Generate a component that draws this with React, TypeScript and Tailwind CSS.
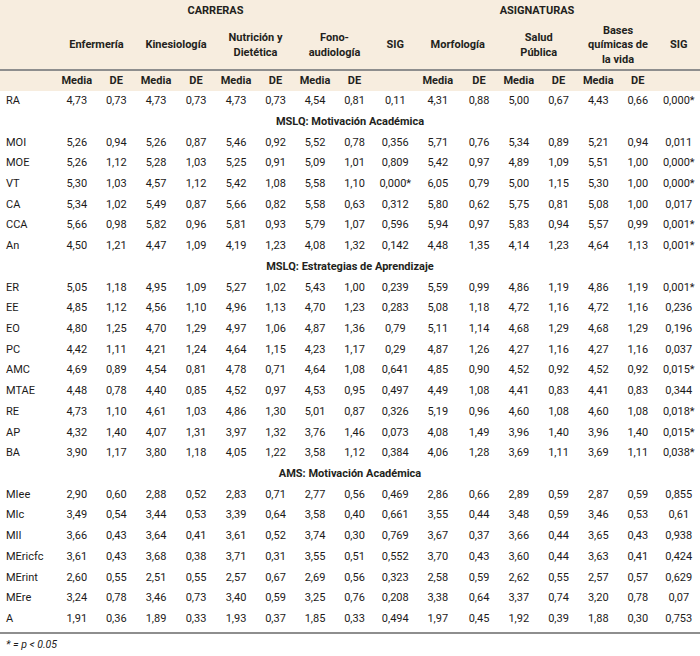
import React from "react"

// Column template shared by every row so the cells line up like a table
const COLS =
  "grid grid-cols-[57px_39.5px_39.5px_40px_40px_40px_39px_40px_39px_42.5px_42.5px_40px_39.5px_40px_39.5px_39.5px_42.5px]"

type Row = [string, ...string[]]

const sections: {title: string | null; rows: Row[]}[] = [
  {
    title: null,
    rows: [["RA", "4,73", "0,73", "4,73", "0,73", "4,73", "0,73", "4,54", "0,81", "0,11", "4,31", "0,88", "5,00", "0,67", "4,43", "0,66", "0,000*"]],
  },
  {
    title: "MSLQ: Motivación Académica",
    rows: [
      ["MOI", "5,26", "0,94", "5,26", "0,87", "5,46", "0,92", "5,52", "0,78", "0,356", "5,71", "0,76", "5,34", "0,89", "5,21", "0,94", "0,011"],
      ["MOE", "5,26", "1,12", "5,28", "1,03", "5,25", "0,91", "5,09", "1,01", "0,809", "5,42", "0,97", "4,89", "1,09", "5,51", "1,00", "0,000*"],
      ["VT", "5,30", "1,03", "4,57", "1,12", "5,42", "1,08", "5,58", "1,10", "0,000*", "6,05", "0,79", "5,00", "1,15", "5,30", "1,00", "0,000*"],
      ["CA", "5,34", "1,02", "5,49", "0,87", "5,66", "0,82", "5,58", "0,63", "0,312", "5,80", "0,62", "5,75", "0,81", "5,08", "1,00", "0,017"],
      ["CCA", "5,66", "0,98", "5,82", "0,96", "5,81", "0,93", "5,79", "1,07", "0,596", "5,94", "0,97", "5,83", "0,94", "5,57", "0,99", "0,001*"],
      ["An", "4,50", "1,21", "4,47", "1,09", "4,19", "1,23", "4,08", "1,32", "0,142", "4,48", "1,35", "4,14", "1,23", "4,64", "1,13", "0,001*"],
    ],
  },
  {
    title: "MSLQ: Estrategias de Aprendizaje",
    rows: [
      ["ER", "5,05", "1,18", "4,95", "1,09", "5,27", "1,02", "5,43", "1,00", "0,239", "5,59", "0,99", "4,86", "1,19", "4,86", "1,19", "0,001*"],
      ["EE", "4,85", "1,12", "4,56", "1,10", "4,96", "1,13", "4,70", "1,23", "0,283", "5,08", "1,18", "4,72", "1,16", "4,72", "1,16", "0,236"],
      ["EO", "4,80", "1,25", "4,70", "1,29", "4,97", "1,06", "4,87", "1,36", "0,79", "5,11", "1,14", "4,68", "1,29", "4,68", "1,29", "0,196"],
      ["PC", "4,42", "1,11", "4,21", "1,24", "4,64", "1,15", "4,23", "1,17", "0,29", "4,87", "1,26", "4,27", "1,16", "4,27", "1,16", "0,037"],
      ["AMC", "4,69", "0,89", "4,54", "0,81", "4,78", "0,71", "4,64", "1,08", "0,641", "4,85", "0,90", "4,52", "0,92", "4,52", "0,92", "0,015*"],
      ["MTAE", "4,48", "0,78", "4,40", "0,85", "4,52", "0,97", "4,53", "0,95", "0,497", "4,49", "1,08", "4,41", "0,83", "4,41", "0,83", "0,344"],
      ["RE", "4,73", "1,10", "4,61", "1,03", "4,86", "1,30", "5,01", "0,87", "0,326", "5,19", "0,96", "4,60", "1,08", "4,60", "1,08", "0,018*"],
      ["AP", "4,32", "1,40", "4,07", "1,31", "3,97", "1,32", "3,76", "1,46", "0,073", "4,08", "1,49", "3,96", "1,40", "3,96", "1,40", "0,015*"],
      ["BA", "3,90", "1,17", "3,80", "1,18", "4,05", "1,22", "3,58", "1,12", "0,384", "4,06", "1,28", "3,69", "1,11", "3,69", "1,11", "0,038*"],
    ],
  },
  {
    title: "AMS: Motivación Académica",
    rows: [
      ["MIee", "2,90", "0,60", "2,88", "0,52", "2,83", "0,71", "2,77", "0,56", "0,469", "2,86", "0,66", "2,89", "0,59", "2,87", "0,59", "0,855"],
      ["MIc", "3,49", "0,54", "3,44", "0,53", "3,39", "0,64", "3,58", "0,40", "0,661", "3,55", "0,44", "3,48", "0,59", "3,46", "0,53", "0,61"],
      ["MII", "3,66", "0,43", "3,64", "0,41", "3,61", "0,52", "3,74", "0,30", "0,769", "3,67", "0,37", "3,66", "0,44", "3,65", "0,43", "0,938"],
      ["MEricfc", "3,61", "0,43", "3,68", "0,38", "3,71", "0,31", "3,55", "0,51", "0,552", "3,70", "0,43", "3,60", "0,44", "3,63", "0,41", "0,424"],
      ["MErint", "2,60", "0,55", "2,51", "0,55", "2,57", "0,67", "2,69", "0,56", "0,323", "2,58", "0,59", "2,62", "0,55", "2,57", "0,57", "0,629"],
      ["MEre", "3,24", "0,78", "3,46", "0,73", "3,40", "0,59", "3,25", "0,76", "0,208", "3,38", "0,64", "3,37", "0,74", "3,20", "0,78", "0,07"],
      ["A", "1,91", "0,36", "1,89", "0,33", "1,93", "0,37", "1,85", "0,33", "0,494", "1,97", "0,45", "1,92", "0,39", "1,88", "0,30", "0,753"],
    ],
  },
]

const subCols = ["Media", "DE", "Media", "DE", "Media", "DE", "Media", "DE", "", "Media", "DE", "Media", "DE", "Media", "DE", ""]

export default function App() {
  return (
    <div className="w-[700px] h-[656px] bg-white text-[11px] text-[#1c1a19] font-['Roboto',sans-serif]">
      {/* Header band */}
      <div className="bg-[#f7eddf] font-bold text-[#231f20]">
        <div className={`${COLS} h-[22px] items-center`}>
          <div />
          <div className="col-span-8 text-center">CARRERAS</div>
          <div />
          <div className="col-span-6 text-center">ASIGNATURAS</div>
          <div />
        </div>
        <div className={`${COLS} h-[47px] items-center text-center leading-[14.5px]`}>
          <div />
          <div className="col-span-2">Enfermería</div>
          <div className="col-span-2">Kinesiología</div>
          <div className="col-span-2">
            Nutrición y<br />
            Dietética
          </div>
          <div className="col-span-2">
            Fono-
            <br />
            audiología
          </div>
          <div>SIG</div>
          <div className="col-span-2">Morfología</div>
          <div className="col-span-2">
            Salud
            <br />
            Pública
          </div>
          <div className="col-span-2">
            Bases
            <br />
            químicas de
            <br />
            la vida
          </div>
          <div>SIG</div>
        </div>
        <div className="h-[2px] bg-[#8e8e8e]" />
        <div className={`${COLS} h-[20px] items-center text-center`}>
          <div />
          {subCols.map((c, i) => (
            <div key={i}>{c}</div>
          ))}
        </div>
      </div>

      {/* Body */}
      {sections.map((s, si) => (
        <div key={si}>
          {s.title && (
            <div className="flex h-[20.72px] items-center justify-center font-bold text-[#231f20]">{s.title}</div>
          )}
          {s.rows.map((r) => (
            <div key={r[0]} className={`${COLS} h-[20.72px] items-center`}>
              <div className="pl-[6px]">{r[0]}</div>
              {r.slice(1).map((v, i) => (
                <div key={i} className="text-center">
                  {v}
                </div>
              ))}
            </div>
          ))}
        </div>
      ))}

      <div className="mt-[2.5px] h-[2px] bg-[#8e8e8e]" />
      <div className="flex h-[22px] items-center pl-[6px] italic text-[10.5px]">* = p &lt; 0.05</div>
    </div>
  )
}
